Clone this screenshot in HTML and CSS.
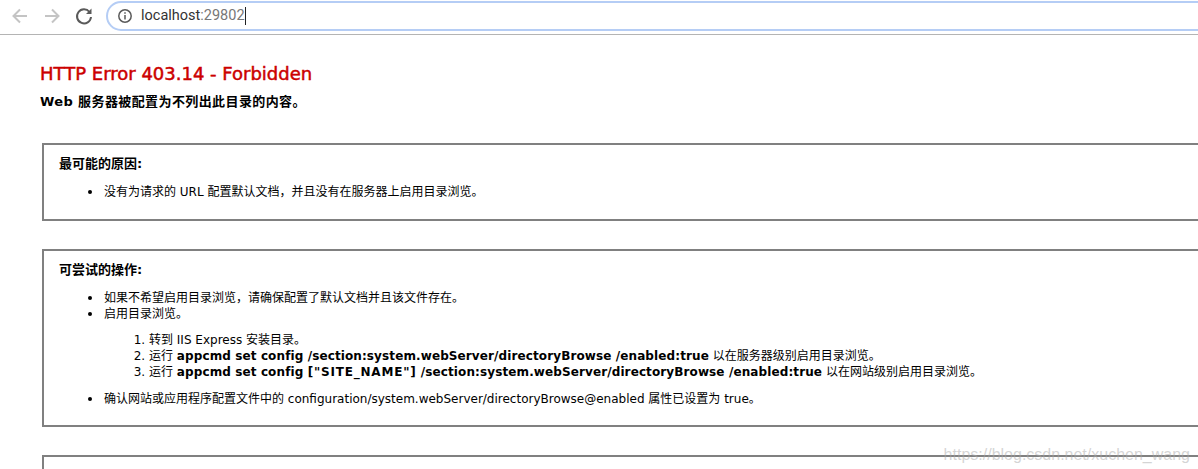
FILE: index.html
```html
<!doctype html>

<html>

<head>
    <meta charset='utf-8'>
    <title>IIS Express</title>
    <link rel="stylesheet" href="styles.css">
</head>

<body>
    <div class="toolbar">
        <svg class="nav" width="20" height="20" viewBox="0 0 20 20" fill="none" stroke="#c4c4c4" stroke-width="2">
            <path d="M17 10H4M10 3.500 3.500 10l6.500 6.500"/>
        </svg>
        <svg class="nav" width="20" height="20" viewBox="0 0 20 20" fill="none" stroke="#c4c4c4" stroke-width="2">
            <path d="M3 10h13M10 3.500 16.500 10 10 16.500"/>
        </svg>
        <svg class="nav" width="20" height="20" viewBox="0 0 20 20" fill="none" stroke="#5a5a5a" stroke-width="2">
            <path d="M15.500 6A7 7 0 1 0 17 11"/>
            <path d="M17.500 2.500V8h-5.500z" fill="#5a5a5a" stroke="none"/>
        </svg>
        <div class="omnibox">
            <svg width="16" height="16" viewBox="0 0 16 16" fill="none" stroke="#5a5a5a" stroke-width="1.500">
                <circle cx="8" cy="8" r="6.200"/>
                <path d="M8 7v4.500M8 4.300v1.500"/>
            </svg>
            <span class="host">localhost</span><span class="port">:29802</span><span class="caret"></span>
        </div>
    </div>

    <div class="content">
        <h1>HTTP Error 403.14 - Forbidden</h1>
        <h2>Web 服务器被配置为不列出此目录的内容。</h2>

        <div class="box box-cause">
            <h3>最可能的原因:</h3>
            <ul>
                <li>没有为请求的 URL 配置默认文档，并且没有在服务器上启用目录浏览。</li>
            </ul>
        </div>

        <div class="box box-action">
            <h3>可尝试的操作:</h3>
            <ul>
                <li>如果不希望启用目录浏览，请确保配置了默认文档并且该文件存在。</li>
                <li>启用目录浏览。
                    <ol>
                        <li>转到 IIS Express 安装目录。</li>
                        <li>运行 <b>appcmd set config /section:system.webServer/directoryBrowse /enabled:true</b> 以在服务器级别启用目录浏览。</li>
                        <li>运行 <b>appcmd set config <span class="site">["SITE_NAME"]</span> /section:system.webServer/directoryBrowse /enabled:true</b> 以在网站级别启用目录浏览。</li>
                    </ol>
                </li>
                <li>确认网站或应用程序配置文件中的 configuration/system.webServer/directoryBrowse@enabled 属性已设置为 true。</li>
            </ul>
        </div>

        <div class="box box-next"></div>
    </div>

    <div class="watermark">https://blog.csdn.net/xuchen_wang</div>
</body>

</html>
```

FILE: styles.css
```css
html, body {
    height: 100%;
}

body {
    margin: 0;
    overflow: hidden;
    background: #fff;
    color: #000;
    font-family: "DejaVu Sans", "Noto Sans CJK SC", sans-serif;
    font-size: 12px;
}

.toolbar {
    display: flex;
    align-items: center;
    gap: 12px;
    height: 34px;
    padding-left: 10px;
    border-bottom: 1px solid #b4b4b4;
    overflow: hidden;
}

.nav {
    margin-top: -3px;
}

.omnibox {
    display: flex;
    align-items: center;
    flex: 1;
    height: 26px;
    margin-top: -3px;
    margin-right: -40px;
    padding-left: 9px;
    border: 2px solid #b5cdf5;
    border-radius: 15px;
    font-family: "Roboto", "Liberation Sans", sans-serif;
    font-size: 14.500px;
}

.omnibox svg {
    margin-right: 8px;
}

.host {
    color: #333;
}

.port {
    color: #777;
}

.caret {
    width: 1px;
    height: 18px;
    background: #222;
}

.content {
    padding: 30px 0 0 40px;
}

h1 {
    margin: 0;
    color: #cc0000;
    font-size: 18px;
    font-weight: normal;
    line-height: 18px;
    -webkit-text-stroke: 0.5px #cc0000;
}

h2 {
    margin: 11px 0 0;
    font-size: 13px;
    font-weight: bold;
    line-height: 16px;
    letter-spacing: 0.400px;
}

.box {
    box-sizing: border-box;
    width: 1156px;
    margin: 0 0 28px 2px;
    padding: 11px 0 0 15px;
    border: 2px solid #808080;
    border-right: 0;
}

.box-cause {
    height: 78px;
    margin-top: 33px;
}

.box-action {
    height: 178px;
}

.box-next {
    height: 14px;
    margin-bottom: 0;
    border-bottom: 0;
}

h3 {
    margin: 0;
    font-size: 13px;
    font-weight: bold;
    line-height: 16px;
}

ul {
    margin: 12px 0 0;
    padding-left: 45px;
    list-style: none;
}

li {
    line-height: 16px;
}

ul > li {
    position: relative;
}

ul > li::before {
    content: "";
    position: absolute;
    left: -16px;
    top: 6px;
    width: 4px;
    height: 4px;
    border-radius: 50%;
    background: #000;
}

ol {
    margin: 10px 0 11px;
    padding-left: 45px;
}

b {
    letter-spacing: 0.110px;
}

.site {
    letter-spacing: 0.800px;
}

.watermark {
    position: absolute;
    right: 8px;
    bottom: 5px;
    color: rgba(170, 170, 170, 0.5);
    font-family: "Liberation Sans", sans-serif;
    font-size: 16px;
}
```
